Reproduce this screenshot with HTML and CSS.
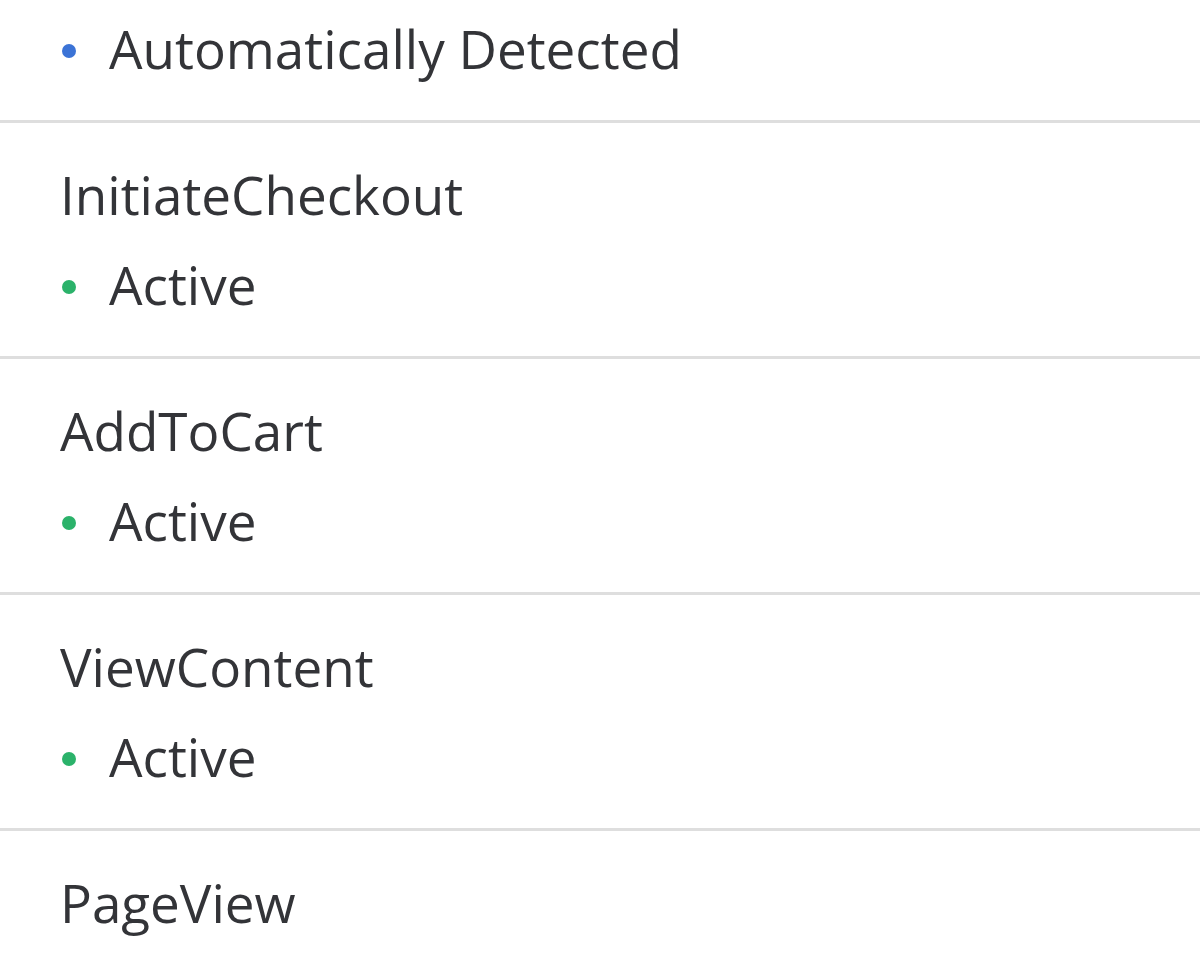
FILE: index.html
```html
<!DOCTYPE html>
<html lang="en">
<head>
<meta charset="utf-8">
<title>Events</title>
<link rel="stylesheet" href="styles.css">
</head>
<body>
<ul class="event-list">
  <li class="event event--partial">
    <div class="event-status"><span class="dot dot--blue"></span>Automatically Detected</div>
  </li>
  <li class="event">
    <div class="event-name">InitiateCheckout</div>
    <div class="event-status"><span class="dot dot--green"></span>Active</div>
  </li>
  <li class="event">
    <div class="event-name">AddToCart</div>
    <div class="event-status"><span class="dot dot--green"></span>Active</div>
  </li>
  <li class="event">
    <div class="event-name">ViewContent</div>
    <div class="event-status"><span class="dot dot--green"></span>Active</div>
  </li>
  <li class="event">
    <div class="event-name">PageView</div>
    <div class="event-status"><span class="dot dot--green"></span>Active</div>
  </li>
</ul>
</body>
</html>
```

FILE: styles.css
```css
html, body {
  margin: 0;
  padding: 0;
  background: #ffffff;
}

body {
  width: 1200px;
  height: 960px;
  overflow: hidden;
  font-family: "Open Sans", "Noto Sans", sans-serif;
  color: #333438;
}

.event-list {
  list-style: none;
  margin: 0;
  padding: 0;
}

.event {
  padding: 27px 0 26px 60px;
  border-bottom: 3px solid #dedede;
  font-size: 53px;
  line-height: 90px;
}

.event--partial {
  padding-top: 4px;
}

.event-name,
.event-status {
  height: 90px;
  white-space: nowrap;
}

.event-status {
  display: flex;
  align-items: center;
}

.dot {
  width: 14px;
  height: 14px;
  border-radius: 50%;
  margin: 4px 33px 0 2px;
  flex: none;
}

.dot--blue {
  background: #3b73d6;
}

.dot--green {
  background: #2bb26a;
}
```
